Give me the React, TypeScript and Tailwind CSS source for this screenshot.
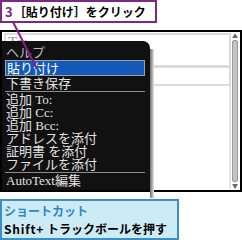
import React from "react";

type MenuRow = { text: string; kind?: "selected" | "dim"; lineAfter?: boolean };

const menuRows: MenuRow[] = [
  { text: "ヘルプ", kind: "dim" },
  { text: "貼り付け", kind: "selected" },
  { text: "下書き保存", lineAfter: true },
  { text: "追加 To:" },
  { text: "追加 Cc:" },
  { text: "追加 Bcc:" },
  { text: "アドレスを添付" },
  { text: "証明書 を添付" },
  { text: "ファイルを添付", lineAfter: true },
  { text: "AutoText編集" },
];

const PopupMenu = () => (
  <div className="absolute left-0 top-[9px] w-[152px] bottom-0 flex">
    <div className="w-[148px] h-full bg-[#111111] rounded-tr-[7px] pt-[5px] pl-[3px] pr-[5px] font-['Liberation_Serif','Noto_Sans_CJK_JP',serif] text-[13px] leading-[13px] text-[#e2e2e2]">
      {menuRows.map((row) => (
        <React.Fragment key={row.text}>
          {row.kind === "selected" ? (
            <div className="h-[16px] my-[1px] bg-[#1459b8] border border-[#9aa3ad] pl-[1px] flex items-center text-white whitespace-nowrap overflow-hidden">
              {row.text}
            </div>
          ) : (
            <div
              className={`h-[13px] pl-[1px] flex items-center whitespace-nowrap overflow-hidden ${
                row.kind === "dim" ? "text-[#b9b9b9]" : ""
              }`}
            >
              {row.text}
            </div>
          )}
          {row.lineAfter && <div className="h-px bg-[#8c8c8c] my-[1px]" />}
        </React.Fragment>
      ))}
    </div>
    <div className="w-[4px] h-full mt-[8px] bg-gradient-to-r from-[#6e6e6e] to-[#e8e8e8]" />
  </div>
);

const Scrollbar = () => (
  <div className="w-[8px] h-full flex flex-col items-center text-[#666] text-[6px] leading-[6px]">
    <span>▲</span>
    <div className="flex-1 w-[6px] my-[1px] bg-[#c4c4c4] border border-[#9a9a9a] rounded-[2px]" />
    <span>▼</span>
  </div>
);

const App = () => {
  return (
    <div className="relative w-[242px] h-[240px] bg-white overflow-hidden font-['Noto_Sans_CJK_JP','Liberation_Sans',sans-serif]">
      <div className="flex flex-col">
        <div className="w-[157px] h-[23px] border-2 border-[#7b2887] flex items-center pl-[3px] text-[12px] font-bold leading-none text-black whitespace-nowrap">
          <span className="text-[#7b2887] text-[13px] mr-[1px]">3</span>
          <span>［貼り付け］をクリック</span>
        </div>

        <div className="relative mt-[7px] h-[162px] border-2 border-black bg-white flex pl-[2px] pt-[1px] pr-[1px] pb-[1px]">
          <div className="flex-1 flex flex-col">
            <div className="h-[35px] border-2 border-[#dcdcdc] border-b-[3px] pl-[2px] font-['Liberation_Serif',serif] text-[15px] leading-[14px] text-[#9a9a9a]">
              To:
            </div>
            <div className="h-[18px] border-2 border-t-0 border-[#dcdcdc]" />
            <div className="flex-1 border-r-2 border-[#e4e4e4]" />
          </div>
          <Scrollbar />
          <PopupMenu />
        </div>

        <div className="mt-[7px] w-[179px] h-[41px] border-2 border-[#3b8fc6] bg-[#cdebf5] pl-[2px] pt-[2px] flex flex-col gap-[2px] text-[12px] font-bold leading-[16px] whitespace-nowrap">
          <span className="text-[#2f88c4]">ショートカット</span>
          <span className="text-black">
            <span className="tracking-[0.8px]">Shift+</span> トラックボールを押す
          </span>
        </div>
      </div>

      <svg className="absolute left-0 top-0 pointer-events-none" width="242" height="240">
        <line x1="13" y1="22" x2="37" y2="69" stroke="#8b1a8b" strokeWidth="2" />
      </svg>
    </div>
  );
};

export default App;
